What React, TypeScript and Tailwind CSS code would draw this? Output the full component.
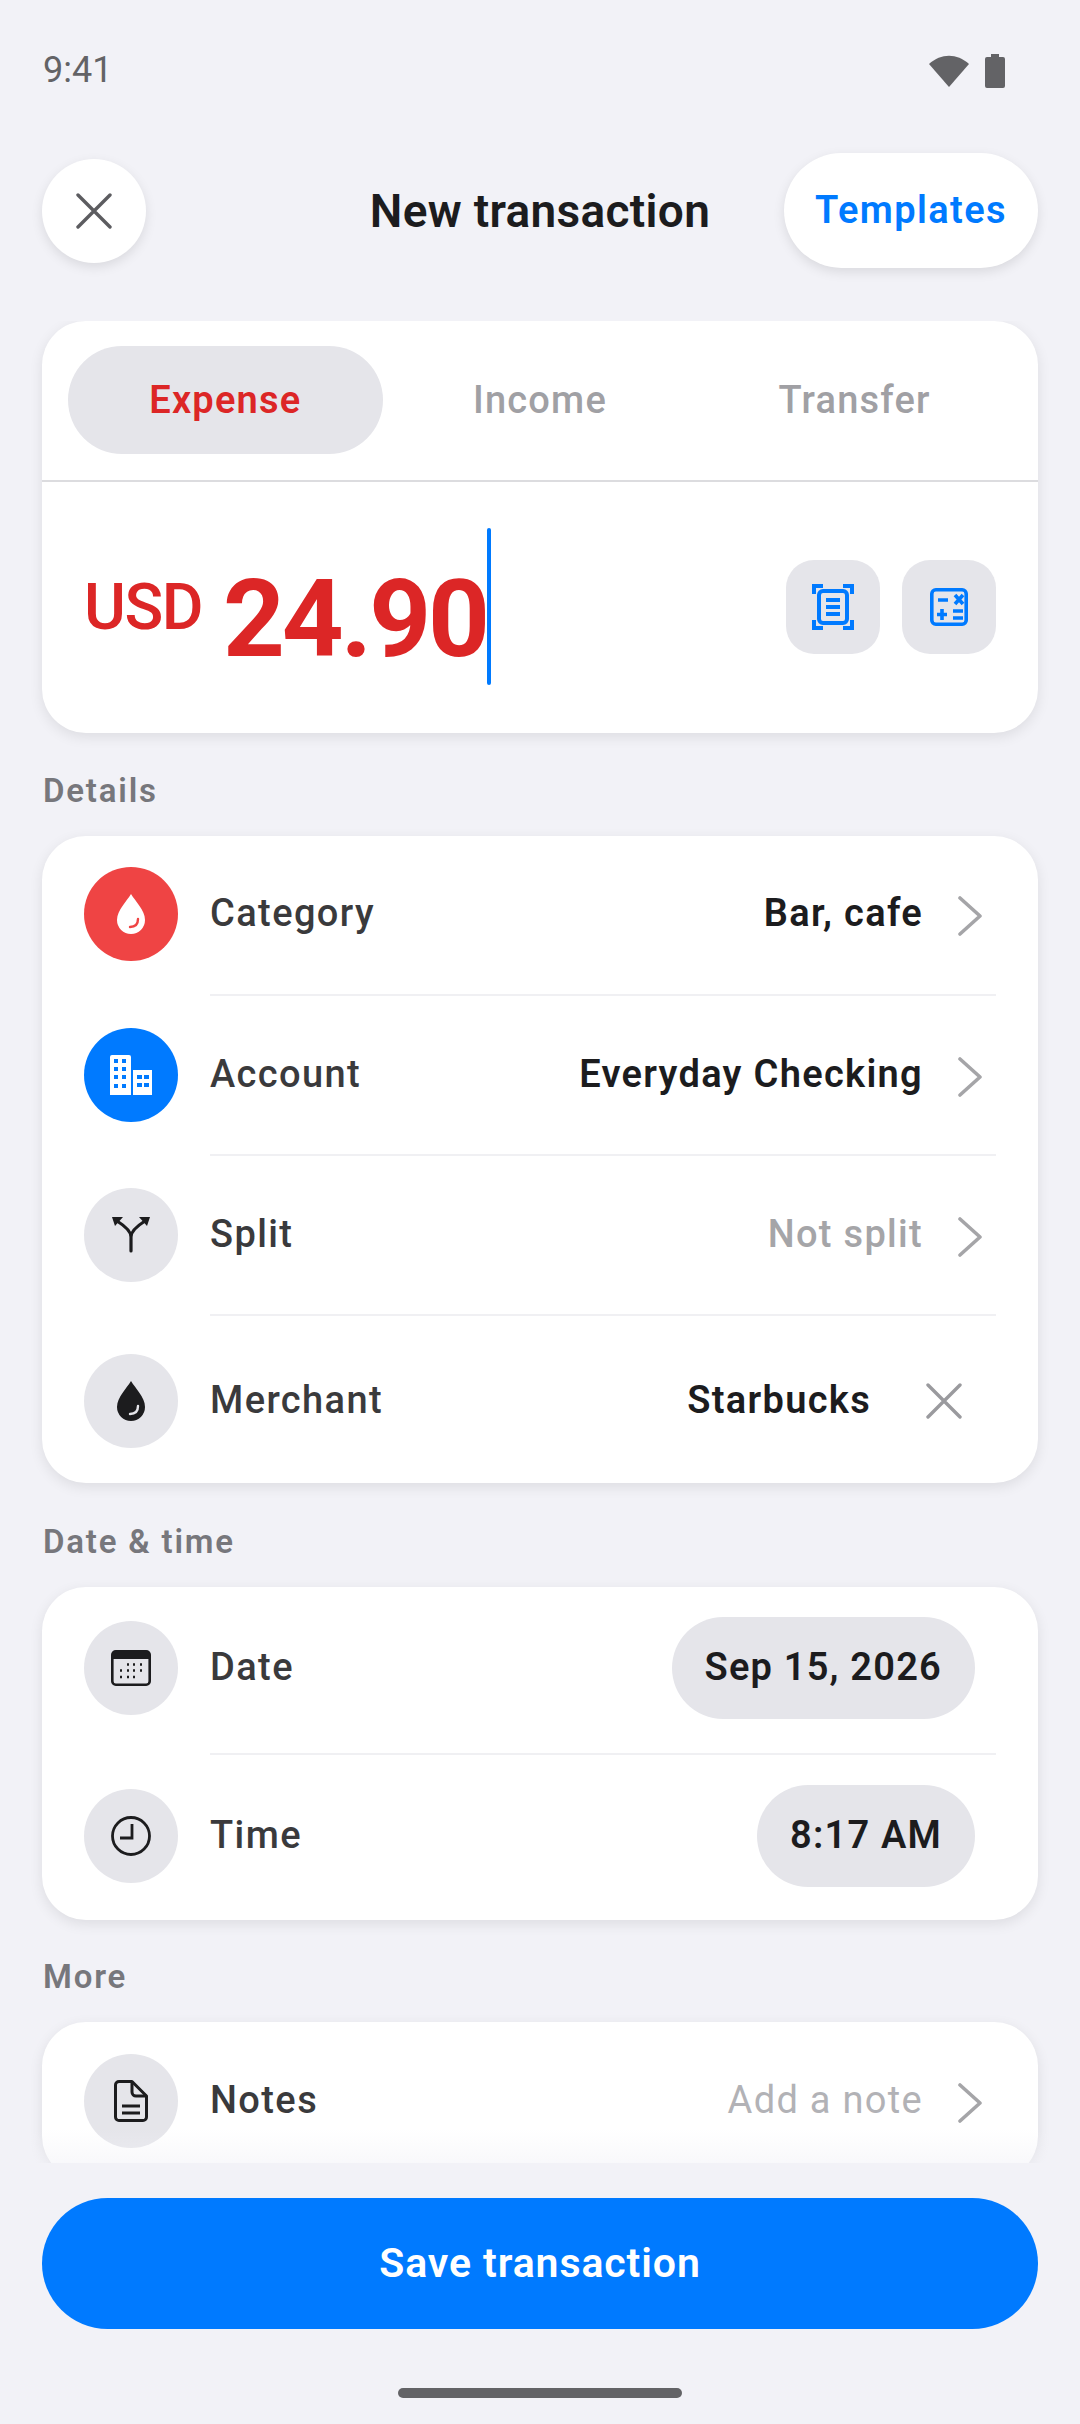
import type { ReactNode } from 'react'

const card = 'bg-white rounded-[44px] shadow-[0_4px_14px_rgba(0,0,0,0.09)]'

function Chevron() {
  return (
    <svg aria-hidden="true" className="w-[24px] h-[40px] mr-[14px] mt-[3px] text-[#a5a5a8]" viewBox="0 0 24 40" fill="none" stroke="currentColor" strokeWidth={3.6} strokeLinecap="round" strokeLinejoin="round">
      <path d="M2 2l20 18L2 38" />
    </svg>
  )
}

function Cross({ className }: { className: string }) {
  return (
    <svg aria-hidden="true" className={className} viewBox="0 0 36 36" fill="none" stroke="currentColor" strokeWidth={3.4} strokeLinecap="round">
      <path d="M2 2l32 32M34 2L2 34" />
    </svg>
  )
}

function Drop({ fill, shine }: { fill: string; shine: string }) {
  return (
    <svg aria-hidden="true" className="w-[30px] h-[42px]" viewBox="0 0 30 42">
      <path d="M15 1C11 8 1 17 1 27a14 14 0 0028 0C29 17 19 8 15 1z" fill={fill} />
      <path d="M22 26c0 5-3 8-8 8" fill="none" stroke={shine} strokeWidth={2.4} strokeLinecap="round" />
    </svg>
  )
}

function Circle({ bg = 'bg-[#e5e5ea]', children }: { bg?: string; children: ReactNode }) {
  return <div className={`w-[94px] h-[94px] shrink-0 rounded-full flex items-center justify-center ${bg}`}>{children}</div>
}

function Label({ children }: { children: ReactNode }) {
  return <span className="block mb-[3px] text-[38px] leading-[46px] font-medium tracking-[1.4px] text-[#3a3a3c]">{children}</span>
}

function Value({ tone = 'strong', children }: { tone?: 'strong' | 'muted' | 'faint'; children: ReactNode }) {
  const toneClass = {
    strong: 'text-[#1c1c1e] font-semibold',
    muted: 'text-[#a5a5a8] font-medium',
    faint: 'text-[#b2b2b6] font-normal',
  }[tone]
  return <span className={`block mb-[3px] text-[38px] leading-[46px] tracking-[1.3px] ${toneClass}`}>{children}</span>
}

function Divider() {
  return <div className="ml-[168px] mr-[42px] h-[2px] bg-[#f0f0f3]" />
}

function SectionTitle({ children }: { children: ReactNode }) {
  return <div className="mb-[25px] px-[43px] text-[33px] leading-[40px] font-semibold tracking-[1.8px] text-[#77777c]">{children}</div>
}

function Row({ icon, label, pt, pb, children }: { icon: ReactNode; label: string; pt: string; pb: string; children: ReactNode }) {
  return (
    <div className={`flex items-center pl-[42px] pr-[42px] ${pt} ${pb}`}>
      {icon}
      <div className="ml-[32px] flex-1">
        <Label>{label}</Label>
      </div>
      {children}
    </div>
  )
}

function LinkValue({ value, tone }: { value: string; tone?: 'strong' | 'muted' | 'faint' }) {
  return (
    <div className="flex items-center gap-[35px]">
      <Value tone={tone}>{value}</Value>
      <Chevron />
    </div>
  )
}

function Pill({ children }: { children: ReactNode }) {
  return (
    <div className="mr-[21px] h-[102px] px-[33px] rounded-full bg-[#e5e5ea] flex items-center text-[38px] font-semibold tracking-[1.2px] text-[#1c1c1e]">
      <span className="mb-[2px]">{children}</span>
    </div>
  )
}

export default function App() {
  return (
    <div className="w-[1080px] h-[2424px] overflow-hidden flex flex-col bg-[#f2f2f7] font-['Roboto',sans-serif]">
      {/* status bar */}
      <div className="h-[153px] shrink-0 px-[43px] pt-[48px] flex justify-between items-start">
        <span className="text-[36px] leading-[44px] text-[#636366]">9:41</span>
        <div className="flex items-start gap-[16px] mr-[32px] mt-[6px]">
          <svg aria-hidden="true" className="w-[40px] h-[34px] text-[#636366]" viewBox="0 0 40 34" fill="currentColor">
            <path d="M20 33L0 10C12 -1 28 -1 40 10z" />
          </svg>
          <svg aria-hidden="true" className="w-[20px] h-[34px] text-[#636366]" viewBox="0 0 20 34" fill="currentColor">
            <path d="M6 0h8v3h4a2 2 0 012 2v27a2 2 0 01-2 2H2a2 2 0 01-2-2V5a2 2 0 012-2h4z" />
          </svg>
        </div>
      </div>

      {/* header */}
      <div className="h-[115px] mb-[53px] shrink-0 px-[42px] grid grid-cols-[1fr_auto_1fr] items-center">
        <div className="w-[104px] h-[104px] rounded-full bg-white shadow-[0_4px_12px_rgba(0,0,0,0.1)] flex items-center justify-center">
          <Cross className="w-[36px] h-[36px] text-[#5c5c60]" />
        </div>
        <div className="text-[46px] leading-[70px] font-semibold tracking-[0.3px] text-[#1c1c1e]">New transaction</div>
        <div className="justify-self-end h-[115px] w-[254px] rounded-full bg-white shadow-[0_4px_12px_rgba(0,0,0,0.1)] flex items-center justify-center text-[38px] font-semibold tracking-[1.4px] text-[#007aff]">
          Templates
        </div>
      </div>

      <div className="relative flex-1 min-h-0 overflow-hidden">
        {/* amount */}
        <div className={`mx-[42px] ${card}`}>
          <div className="px-[26px] pt-[25px] pb-[26px] grid grid-cols-3 border-b-2 border-[#dcdcdf]">
            <div className="h-[108px] rounded-full bg-[#e5e5ea] flex items-center justify-center text-[38px] font-semibold tracking-[1.2px] text-[#dc2626]">Expense</div>
            <div className="h-[108px] flex items-center justify-center text-[38px] font-medium tracking-[1.2px] text-[#a0a0a4]">Income</div>
            <div className="h-[108px] flex items-center justify-center text-[38px] font-medium tracking-[1.2px] text-[#a0a0a4]">Transfer</div>
          </div>
          <div className="h-[251px] pl-[42px] pr-[42px] flex items-center">
            <span className="text-[64px] leading-[70px] font-medium tracking-[-1.5px] text-[#dc2626] mr-[21px]">USD</span>
            <span className="text-[108px] leading-[120px] font-bold tracking-[-3px] text-[#dc2626] mt-[22px]">24.90</span>
            <div className="w-[4px] h-[157px] rounded-full bg-[#007aff] mb-[2px]" />
            <div className="ml-auto flex gap-[22px] mb-[2px]">
              <div className="w-[94px] h-[94px] rounded-[28px] bg-[#e5e5ea] flex items-center justify-center">
                <svg aria-hidden="true" className="w-[42px] h-[46px] text-[#007aff]" viewBox="0 0 42 46" fill="none" stroke="currentColor" strokeWidth={4}>
                  <path d="M2 10V2h9M31 2h9v8M2 36v8h9M31 44h9v-8" />
                  <rect x="7" y="7" width="28" height="32" rx="4" />
                  <path d="M14 16h14M14 23h14M14 30h14" />
                </svg>
              </div>
              <div className="w-[94px] h-[94px] rounded-[28px] bg-[#e5e5ea] flex items-center justify-center">
                <svg aria-hidden="true" className="w-[38px] h-[38px] text-[#007aff]" viewBox="0 0 38 38" fill="none" stroke="currentColor" strokeWidth={3.6}>
                  <rect x="1.800" y="1.800" width="34.400" height="34.400" rx="4" />
                  <path d="M8 12h10M25 7l8 9M33 7l-8 9M12 21v11M7 26.500h10M23 23h10M23 30h10" />
                </svg>
              </div>
            </div>
          </div>
        </div>

        <div className="mt-[38px]">
          <SectionTitle>Details</SectionTitle>
        </div>
        <div className={`mx-[42px] ${card}`}>
          <Row
            label="Category"
            pt="pt-[31px]"
            pb="pb-[33px]"
            icon={
              <Circle bg="bg-[#ef4444]">
                <Drop fill="#ffffff" shine="#ef4444" />
              </Circle>
            }
          >
            <LinkValue value="Bar, cafe" />
          </Row>
          <Divider />
          <Row
            label="Account"
            pt="pt-[32px]"
            pb="pb-[32px]"
            icon={
              <Circle bg="bg-[#007aff]">
                <svg aria-hidden="true" className="w-[42px] h-[40px]" viewBox="0 0 42 40">
                  <path d="M2 0h17a2 2 0 012 2v38H0V2a2 2 0 012-2zM23 15h19v25H23z" fill="#ffffff" />
                  <path d="M4 4h4v4H4zM12 4h4v4h-4zM4 12h4v4H4zM12 12h4v4h-4zM4 20h4v4H4zM12 20h4v4h-4zM4 29h4v4H4zM12 29h4v4h-4zM27 20h5v4h-5zM34 20h5v4h-5zM27 28h5v4h-5zM34 28h5v4h-5z" fill="#007aff" />
                </svg>
              </Circle>
            }
          >
            <LinkValue value="Everyday Checking" />
          </Row>
          <Divider />
          <Row
            label="Split"
            pt="pt-[32px]"
            pb="pb-[32px]"
            icon={
              <Circle>
                <svg aria-hidden="true" className="w-[38px] h-[36px] text-[#1c1c1e]" viewBox="0 0 38 36" fill="none" stroke="currentColor" strokeWidth={3.2} strokeLinecap="round">
                  <path d="M19 34V20M19 20C19 14 13 9 5 4M19 20C19 14 25 9 33 4" />
                  <path d="M0 0h11L3 9zM38 0H27l8 9z" fill="currentColor" stroke="none" />
                </svg>
              </Circle>
            }
          >
            <LinkValue value="Not split" tone="muted" />
          </Row>
          <Divider />
          <Row
            label="Merchant"
            pt="pt-[38px]"
            pb="pb-[35px]"
            icon={
              <Circle>
                <Drop fill="#1c1c1e" shine="#e5e5ea" />
              </Circle>
            }
          >
            <Value>Starbucks</Value>
            <Cross className="ml-[55px] mr-[34px] w-[36px] h-[36px] text-[#9a9a9e]" />
          </Row>
        </div>

        <div className="mt-[39px]">
          <SectionTitle>Date &amp; time</SectionTitle>
        </div>
        <div className={`mx-[42px] ${card}`}>
          <Row
            label="Date"
            pt="pt-[30px]"
            pb="pb-[34px]"
            icon={
              <Circle>
                <svg aria-hidden="true" className="w-[40px] h-[36px] text-[#1c1c1e]" viewBox="0 0 40 36" fill="none" stroke="currentColor">
                  <rect x="1.300" y="1.300" width="37.400" height="33.400" rx="3.500" strokeWidth={2.600} />
                  <path d="M1 9V4a3 3 0 013-3h32a3 3 0 013 3v5z" fill="currentColor" stroke="none" />
                  <path d="M16 14.500h2M22 14.500h2M29 14.500h2M9 20.500h2M16 20.500h2M22 20.500h2M29 20.500h2M9 27h2M16 27h2M22 27h2" strokeWidth={2.600} />
                </svg>
              </Circle>
            }
          >
            <Pill>Sep 15, 2026</Pill>
          </Row>
          <Divider />
          <Row
            label="Time"
            pt="pt-[30px]"
            pb="pb-[33px]"
            icon={
              <Circle>
                <svg aria-hidden="true" className="w-[40px] h-[40px] text-[#1c1c1e]" viewBox="0 0 40 40" fill="none" stroke="currentColor" strokeWidth={2.800}>
                  <circle cx="20" cy="20" r="18.500" />
                  <path d="M21 8v14H9" />
                </svg>
              </Circle>
            }
          >
            <Pill>8:17 AM</Pill>
          </Row>
        </div>

        <div className="mt-[37px]">
          <SectionTitle>More</SectionTitle>
        </div>
        <div className={`mx-[42px] ${card}`}>
          <Row
            label="Notes"
            pt="pt-[32px]"
            pb="pb-[32px]"
            icon={
              <Circle>
                <svg aria-hidden="true" className="w-[34px] h-[42px] text-[#1c1c1e]" viewBox="0 0 34 42" fill="none" stroke="currentColor" strokeWidth={3} strokeLinejoin="round">
                  <path d="M5 1.500h13L32.500 16v21a3.500 3.500 0 01-3.500 3.500H5A3.500 3.500 0 011.500 37V5A3.500 3.500 0 015 1.500z" />
                  <path d="M18 1.500V12a4 4 0 004 4h10.500M8 26h18M8 33h18" />
                </svg>
              </Circle>
            }
          >
            <LinkValue value="Add a note" tone="faint" />
          </Row>
        </div>

        {/* fade under the list, just above the footer */}
        <div className="absolute inset-x-0 bottom-0 h-[34px] bg-gradient-to-b from-[#f2f2f7]/0 to-[#f2f2f7]/50" />
      </div>

      {/* footer */}
      <div className="h-[261px] shrink-0 flex flex-col items-center bg-[#f2f2f7] pt-[35px]">
        <div className="w-[996px] h-[131px] rounded-full bg-[#007aff] flex items-center justify-center text-[41px] font-semibold tracking-[0.9px] text-white">
          Save transaction
        </div>
        <div className="mt-[59px] w-[284px] h-[10px] rounded-full bg-[#636366]" />
      </div>
    </div>
  )
}
